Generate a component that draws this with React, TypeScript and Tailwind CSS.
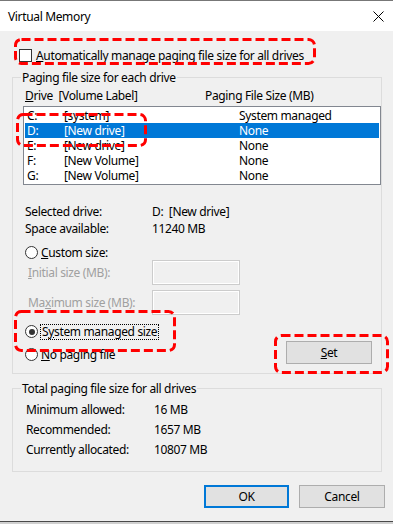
import React from "react"

const drives = [
  { letter: "C:", label: "[system]", size: "System managed" },
  { letter: "D:", label: "[New drive]", size: "None", selected: true },
  { letter: "E:", label: "[New drive]", size: "None" },
  { letter: "F:", label: "[New Volume]", size: "None" },
  { letter: "G:", label: "[New Volume]", size: "None" },
]

const Radio = ({ checked }: { checked?: boolean }) => (
  <span className="w-[13px] h-[13px] rounded-full border border-[#333333] bg-white flex items-center justify-center shrink-0">
    {checked && <span className="w-[6px] h-[6px] rounded-full bg-[#333333]" />}
  </span>
)

// red dashed callout drawn over the dialog
const Callout = ({ x, y, w, h }: { x: number; y: number; w: number; h: number }) => (
  <svg className="absolute pointer-events-none" style={{ left: x, top: y }} width={w} height={h}>
    <rect x={1.5} y={1.5} width={w - 3} height={h - 3} rx={6} fill="none" stroke="#ff0000" strokeWidth={3} strokeDasharray="9 4" />
  </svg>
)

export default function App() {
  return (
    <div className="relative w-[393px] h-[524px] overflow-hidden bg-[#f0f0f0] text-[12px] tracking-[-0.35px] text-black font-['Noto_Sans',sans-serif] leading-[15px]">
      {/* title bar */}
      <div className="h-[31px] border-t border-[#777777] bg-white flex items-center justify-between pl-[8px] pr-[9px]">
        <span>Virtual Memory</span>
        <svg width="11" height="11" viewBox="0 0 11 11">
          <path d="M0.5 0.5 L10.5 10.5 M10.5 0.5 L0.5 10.5" stroke="#000" strokeWidth="1" />
        </svg>
      </div>

      <div className="h-[490px] flex flex-col">
        <div className="mt-[17px] pl-[19px] flex items-center gap-[4px] h-[15px]">
          <span className="w-[13px] h-[13px] border border-[#333333] bg-white" />
          <span>
            <u>A</u>utomatically manage paging file size for all drives
          </span>
        </div>

        {/* paging file size for each drive */}
        <fieldset className="mt-[7px] ml-[12px] w-[370px] border border-[#dcdcdc]">
          <legend className="ml-[8px] px-[1px] leading-[15px]">Paging file size for each drive</legend>
          <div className="pl-[12px] mt-[3px] flex h-[15px]">
            <span className="w-[180px]">
              <u>D</u>rive&nbsp; [Volume Label]
            </span>
            <span>Paging File Size (MB)</span>
          </div>
          <div className="ml-[10px] mt-[3px] w-[358px] border border-[#828790] bg-white p-[1px]">
            {drives.map((d) => (
              <div
                key={d.letter}
                className={`flex h-[15px] pl-[2px] ${d.selected ? "bg-[#0078d7] text-white" : ""}`}
              >
                <span className="w-[37px]">{d.letter}</span>
                <span className="w-[175px]">{d.label}</span>
                <span>{d.size}</span>
              </div>
            ))}
          </div>

          <div className="pl-[12px] mt-[18px] leading-[17px]">
            <div className="flex">
              <span className="w-[127px]">Selected drive:</span>
              <span>D:&nbsp; [New drive]</span>
            </div>
            <div className="flex">
              <span className="w-[127px]">Space available:</span>
              <span>11240 MB</span>
            </div>
          </div>

          <div className="pl-[12px] mt-[8px] flex items-center gap-[3px] h-[15px]">
            <Radio />
            <span>
              <u>C</u>ustom size:
            </span>
          </div>
          <div className="pl-[15px] flex items-center h-[25px] text-[#a0a0a0]">
            <span className="w-[124px]">
              <u>I</u>nitial size (MB):
            </span>
            <span className="w-[88px] h-[25px] border border-[#cccccc] shadow-[inset_0_0_0_1px_#ffffff]" />
          </div>
          <div className="pl-[15px] mt-[5px] flex items-center h-[25px] text-[#a0a0a0]">
            <span className="w-[124px]">
              Ma<u>x</u>imum size (MB):
            </span>
            <span className="w-[88px] h-[25px] border border-[#cccccc] shadow-[inset_0_0_0_1px_#ffffff]" />
          </div>

          <div className="flex justify-between items-start mt-[9px] pr-[9px] pb-[9px]">
            <div className="pl-[12px] flex flex-col gap-[8px]">
              <div className="flex items-center gap-[2px] h-[15px]">
                <Radio checked />
                <span className="border border-dotted border-black px-[1px] leading-[14px]">
                  S<u>y</u>stem managed size
                </span>
              </div>
              <div className="flex items-center gap-[3px] h-[15px]">
                <Radio />
                <span>
                  <u>N</u>o paging file
                </span>
              </div>
            </div>
            <button className="mt-[17px] w-[86px] h-[23px] bg-[#e1e1e1] border border-[#adadad]">
              <u>S</u>et
            </button>
          </div>
        </fieldset>

        {/* totals */}
        <fieldset className="mt-[7px] ml-[12px] w-[370px] border border-[#dcdcdc]">
          <legend className="ml-[8px] px-[1px] leading-[15px]">Total paging file size for all drives</legend>
          <div className="pl-[13px] mt-[4px] pb-[11px] leading-[20px]">
            <div className="flex">
              <span className="w-[128px]">Minimum allowed:</span>
              <span>16 MB</span>
            </div>
            <div className="flex">
              <span className="w-[128px]">Recommended:</span>
              <span>1657 MB</span>
            </div>
            <div className="flex">
              <span className="w-[128px]">Currently allocated:</span>
              <span>10807 MB</span>
            </div>
          </div>
        </fieldset>

        <div className="mt-[13px] flex justify-end gap-[10px] pr-[8px]">
          <button className="w-[85px] h-[23px] bg-[#e1e1e1] border-2 border-[#0078d7]">OK</button>
          <button className="w-[86px] h-[23px] bg-[#e1e1e1] border border-[#adadad]">Cancel</button>
        </div>
      </div>

      <div className="h-[1px] bg-[#4a4a4a]" />
      <div className="h-[2px] bg-[#d0d0d0]" />

      <Callout x={14} y={38} w={302} h={27} />
      <Callout x={16} y={113} w={131} h={34} />
      <Callout x={14} y={310} w={162} h={42} />
      <Callout x={274} y={334} w={115} h={40} />
    </div>
  )
}
